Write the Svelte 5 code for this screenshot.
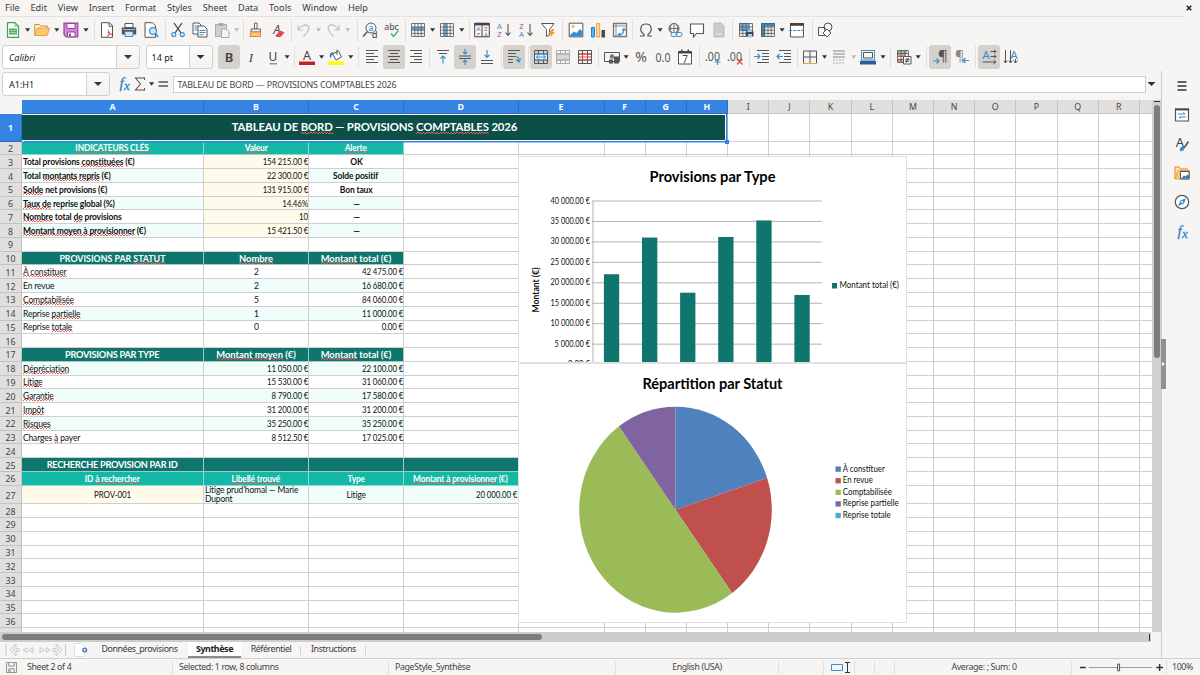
<script lang="ts">
  type Cell = { t: string; c: string };
  type Tool = { icon: string; arrow?: boolean; on?: boolean; dim?: boolean };
  type Group = { w: number; tools: Tool[] };

  const menus = ['File', 'Edit', 'View', 'Insert', 'Format', 'Styles', 'Sheet', 'Data', 'Tools', 'Window', 'Help'];

  // icon helpers
  const G = '#555';
  const B = '#3a8fd0';
  const line = (d: string, c = G, w = 1) => `<path d="${d}" fill="none" stroke="${c}" stroke-width="${w}"/>`;
  const fill = (d: string, c = G) => `<path d="${d}" fill="${c}"/>`;
  const txt = (x: number, y: number, s: string, size: number, c = G, extra = '') =>
    `<text x="${x}" y="${y}" font-size="${size}" fill="${c}" font-family="Noto Sans, sans-serif" text-anchor="middle" ${extra}>${s}</text>`;
  const table = (c: string) => line('M1.5 1.5h13v13h-13zM1.5 5h13M1.5 8.2h13M1.5 11.4h13M4.8 1.5v13M8 1.5v13M11.2 1.5v13', c, 0.8);
  const merged = (c: string, m: string) => line('M1.5 1.5h13v13h-13zM1.5 5h13M1.5 11h13M5.5 1.5v3.5M10.5 1.5v3.5M5.5 11v3.5M10.5 11v3.5', c) + line('M2 5h12M2 11h12', m);

  const icons: Record<string, string> = {
    new: `<path d="M2.5.7h7.5l3.5 3.5v11.1h-11z" fill="#fff" stroke="#3fa45b" stroke-width="1.2"/>` + fill('M4 6.5h8v6H4z', '#4fae67') + line('M10 .7v3.5h3.5', '#3fa45b', 0.8) + line('M4.5 8.5h7M4.5 10.500h7', '#d8efdd', 0.6),
    open: `<path d="M.8 13.5V2.5h4.5l1 1.5h7V6" fill="#fdf1dc" stroke="#e08a1e"/><path d="M.8 13.5 3.2 6h12.3l-2.3 7.5z" fill="#fbc878" stroke="#eba13d"/>`,
    save: `<path d="M1 1.2h13.8v13.6H3L1 12.5z" fill="#cf8ad6" stroke="#99459f" stroke-width="1.2"/><path d="M4 1.5h8v5H4z" fill="#fff" stroke="#99459f"/><path d="M4.5 10h7.5v4.8H4.5z" fill="#fff" stroke="#99459f"/>` + fill('M6 11.5h2v3H6z', '#99459f'),
    pdf: `<path d="M2.5.7h8l3 3v11.6h-11z" fill="#fff" stroke="#555"/>` + line('M10 .7v3.5h3.5') + line('M8 14.5c4-2 2-5 1.2-6M9 10c1 2 3 2.5 5.5 2.5', '#e1444d', 1.2),
    print: fill('M.8 5.5h14.4v7H.8z', '#515358') + `<path d="M4 1.5h8v4H4z" fill="#fff" stroke="#555"/><path d="M4 9.5h8v5H4z" fill="#cfe5f6" stroke="#3a8fd0"/>` + line('M2 7.5h12', '#fff', 0.6),
    preview: `<path d="M2 .7h7.5l3 3v11.6H2z" fill="#fff" stroke="#555"/><circle cx="10" cy="9" r="3.4" fill="#cfe7fa" stroke="#3a8fd0" stroke-width="1.2"/>` + line('M12.3 11.5l3 3.5', B, 1.5),
    cut: line('M4 1l7 10M12 1L5 11', '#444', 1.3) + `<circle cx="3.7" cy="12.6" r="2" fill="none" stroke="${B}" stroke-width="1.2"/><circle cx="12.3" cy="12.6" r="2" fill="none" stroke="${B}" stroke-width="1.2"/>`,
    copy: `<path d="M1 1h6l2 2v9H1z" fill="#fff" stroke="#555"/><path d="M6 4h6l3 3v8H6z" fill="#fff" stroke="#555"/>` + line('M2.5 4h4M2.5 6h3M2.5 8h3M7.5 8.5h6M7.5 10.5h6M7.5 12.7h4', B),
    paste: `<path d="M1.5 2.5h11v12h-11z" fill="#d0d0d0" stroke="#aaa"/><path d="M4.5 1h5v3h-5z" fill="#aaa"/><path d="M7.5 7h5l2.5 2.5v6H7.5z" fill="#f4f4f4" stroke="#aaa"/>`,
    brush: `<path d="M6.5 1h2.5v6H6.5z" fill="#fff" stroke="#666"/><path d="M3 7h9.5v3H3z" fill="#eee" stroke="#666"/><path d="M3 10h9.5v4.5H2z" fill="#f9c987" stroke="#e08a1e"/>`,
    clear: txt(7, 12, 'A', 13, '#555', 'font-style="italic"') + fill('M5.5 13.5l5-5 4 2-4 4.5h-4z', '#e4484f'),
    undo: line('M2 3v5h5M2.3 7.5C5 3.5 9 2 11.5 3.5c3 2 1 6-4 11', '#bbb', 1.1),
    redo: line('M14 3v5H9M13.7 7.5C11 3.5 7 2 4.5 3.5c-3 2-1 6 4 11', '#bbb', 1.1),
    find: `<circle cx="9" cy="6" r="5" fill="#f6fbff" stroke="#555"/>` + txt(9, 8.5, 'a', 8, '#1b6fb5') + line('M5.5 9.5l-4.5 5', '#555', 1.5) + txt(12.7, 15.5, 'd', 9.5, '#444'),
    spell: txt(7.5, 7.5, 'abc', 8.8, '#444') + line('M7 11.5l2.5 3 5-6', '#3fae67', 1.2),
    rows: fill('M1.5 5h13v3.3h-13z', '#62b0e6') + table('#555'),
    cols: fill('M5 1.5h3.3v13H5z', '#62b0e6') + table('#555'),
    sort: line('M.7 1.2h14.6v13.6H.7zM8 2v13', '#444') + fill('M.5 1h15v2.4H.5z', '#444') + txt(4.3, 9, 'A', 6, '#2a80c8') + txt(4.3, 14.5, 'Z', 6, '#9c3fa5') + txt(11.8, 9, 'Z', 6, '#9c3fa5') + txt(11.8, 14.5, 'A', 6, '#2a80c8'),
    asc: txt(3.5, 7, 'A', 7.6, B) + txt(3.5, 15, 'Z', 7.6, '#a44bad') + line('M12 2v11M9.5 10.5l2.5 3 2.5-3', '#555', 1.1),
    desc: txt(3.5, 7, 'Z', 7.6, '#a44bad') + txt(3.5, 15, 'A', 7.6, B) + line('M12 2v11M9.5 10.5l2.5 3 2.5-3', '#555', 1.1),
    filter: `<path d="M1.5 1.5h12.5L9.5 7.5v5.5l-3 1.5v-7z" fill="#fff" stroke="#555"/>` + fill('M12 7l-4 5h3l-1 3.5 5-5.5h-2.5l2-3z', '#f0982c'),
    image: `<path d="M1.2 1.2h13.6v13.6H1.2z" fill="#fff" stroke="#555"/>` + fill('M2 13l4-3.5 2.5 1.5 3.5-4 2.5 2.5V14H2z', '#3a8fd0') + `<circle cx="5" cy="4.500" r="1.3" fill="#fbd08a" stroke="#eba13d" stroke-width=".7"/>`,
    chart: `<path d="M1.5 5.5h3v9.500h-3z" fill="#62b0e6" stroke="#2a80c8"/><path d="M6.7 1.5h3V15h-3z" fill="#fbd9a8" stroke="#eba13d"/>` + fill('M11.5 8h3.5v7.500h-3.500z', '#4a4a4a'),
    pivot: `<path d="M1.5 1.5h13v13h-13z" fill="#fff" stroke="#777" stroke-width="1.3"/>` + line('M1.5 4h13M4 1.5v13', '#888') + line('M6 13c4 0 6-2.5 6-6M10 8.5L12 6.5l2 2M8 11l-2 2 2 1.8', B, 1.1),
    omega: line('M2 14h4v-1.5C1 9 2 2 8 2s7 7 2 10.5V14h4', '#555', 1.2),
    link: `<circle cx="7" cy="6.5" r="5" fill="none" stroke="#555"/>` + line('M2 6.5h10M7 1.5v10M4.5 2.5c-1.5 3-1.5 5 0 8M9.5 2.5c1.5 3 1.5 5 0 8', G, 0.8) + `<rect x="4" y="10.5" width="6" height="4" rx="2" fill="#f6f5f4" stroke="${B}"/><rect x="9" y="10.5" width="6" height="4" rx="2" fill="none" stroke="${B}"/>`,
    comment: `<path d="M1.5 2h13v9.5H7.5L4.5 15v-3.5h-3z" fill="#fff" stroke="#555" stroke-width="1.1"/>`,
    footer: `<path d="M3 1h7l3 3v11H3z" fill="#ccc" stroke="#bbb"/>` + line('M5 12h6', '#eee'),
    area: fill('M1 1h10v8H1z', '#62b0e6') + table('#555') + fill('M8 9.5h7.5v4.5H8z', '#445') + fill('M10 8h4v2h-4zM10 12h4v3.5h-4z', '#9fcbee'),
    freeze: fill('M1 1h14v3.5H1zM1 1h4v14H1z', '#3a8fd0') + table('#555'),
    split: `<path d="M1.5 1.5h13v13.5h-13z" fill="#fff" stroke="#555"/>` + fill('M1 1h14v2.8H1z', '#444') + `<path d="M0 8.500h16" stroke="${B}" stroke-width="1.2" stroke-dasharray="3 1"/>`,
    shapes: `<circle cx="11" cy="5" r="4" fill="none" stroke="#555"/>` + line('M1.5 5.5H8v8H1.5z') + `<path d="M10 7l4 4-4 4-4-4z" fill="#fff" stroke="#555"/>`,
    bold: txt(8, 12.5, 'B', 13, '#444', 'font-weight="600"'),
    italic: txt(8, 12.5, 'I', 13, '#444', 'font-style="italic" style="font-family:\'Liberation Serif\'"'),
    underline: txt(8, 12, 'U', 12, '#444') + line('M4.5 14.8h7.5', B, 1.2),
    fontcolor: txt(8, 11, 'A', 12.5, '#444') + fill('M0 12.5h16v3.5H0z', '#c9211e'),
    fillcolor: `<path d="M4.5 5l6-3 3 6-5.5 3z" fill="#fff" stroke="#555"/>` + line('M9 6V.5', '#555') + fill('M2.5 9.5C1 6 2 3 5.5 3L4 6z', '#2a80c8') + fill('M0 12.5h16v3.5H0z', '#ffff00'),
    left: line('M2 1.5h12M2 4.5h8M2 7.5h12M2 10.5h8M2 13.5h12'),
    center: line('M2 1.5h12M4 4.5h8M2 7.5h12M4 10.5h8M2 13.5h12'),
    right: line('M2 1.5h12M6 4.5h8M2 7.5h12M6 10.5h8M2 13.5h12'),
    top: line('M2 1.5h12M4 4.5h8') + line('M8 14.5V7M5.5 9.5L8 7l2.5 2.5', B, 1.2),
    middle: line('M2 7h12M2 9.5h12') + line('M8 0v5M6 3l2 2 2-2M8 16v-5M6 13l2-2 2 2', B, 1.2),
    bottom: line('M2 14.5h12M2 11.5h12') + line('M8 1v7M5.5 6L8 8.5 10.5 6', B, 1.2),
    wrap: line('M2 1.5h12M2 4.5h8M2 7.5h7M2 10.5h5M2 13.5h5') + line('M9 7.5c3 0 4 2 4 4.5M10 10.5l3 2.5 1.5-3.5', B, 1.2),
    mergec: fill('M2 5h12v6H2z', '#eaf5fd') + merged('#555', B) + line('M3 8h10M5.5 6L3.5 8l2 2M10.5 6l2 2-2 2', B),
    merge: fill('M2 5h12v6H2z', '#d8d8d8') + merged('#aaa', '#aaa'),
    unmerge: fill('M2 5h12v6H2z', '#fff') + merged('#555', '#d33d40') + line('M2 8h12M5.5 5v6M10.5 5v6', '#d33d40'),
    currency: line('M.5 3.5h15v9H.5z', '#555') + `<circle cx="8" cy="7.5" r="2.2" fill="#777"/>` + fill('M5 10.5h4v4H5zM10 7.5h5v7h-5z', '#555'),
    percent: txt(8, 12.5, '%', 14),
    number: txt(8, 12.5, '0.0', 13, G, 'textLength="15" lengthAdjust="spacingAndGlyphs"'),
    date: `<path d="M1.5 2.5h13v12.5h-13z" fill="#fff" stroke="#555"/>` + fill('M1.5 2h13v2.5h-13zM4 .5h1.5v2H4zM10.5.5H12v2h-1.5z', '#444') + txt(8, 13.5, '7', 10, '#444'),
    adddec: txt(7.5, 12, '.00', 13, G, 'textLength="15" lengthAdjust="spacingAndGlyphs"') + line('M9.5 13h6M12.5 10v6', B, 1.2),
    deldec: txt(7.5, 12, '.00', 13, G, 'textLength="15" lengthAdjust="spacingAndGlyphs"') + line('M10 10l5.5 5.5M15.5 10L10 15.5', '#e1444d', 1.2),
    indent: line('M3 1.5h12M8 4.5h7M8 7.5h7M8 10.5h7M3 13.5h12') + line('M0 7.5h6M3.5 5L6 7.5 3.5 10', B, 1.2),
    outdent: line('M3 1.5h12M8 4.5h7M8 7.5h7M8 10.5h7M3 13.5h12') + line('M1 7.5h6M3.5 5L1 7.5 3.5 10', B, 1.2),
    borders: line('M1.5 2h13v12.5M1.5 14.5V2M8 2v12.5M1.5 8h13') + line('M1.5 14.5h13', '#eba13d'),
    lines: line('M2 2h12M2 5h12M2 8h12', '#aaa', 1.4) + `<path d="M2 11h12M2 14h12" stroke="#aaa" stroke-dasharray="2 1"/>`,
    bordercolor: line('M1.5 1.5h13v9.5h-13z', B, 1) + line('M3.5 3.5h9v5.5h-9z', '#555') + fill('M0 11.8h16v3.7H0z', '#2a6099'),
    cond: fill('M1 1h10v3H1z', '#7bc98b') + fill('M1 4h9v3H1zM1 10h6v3H1z', '#ee8c8c') + line('M1.5 1.5h11v12h-11zM1.5 4.5h11M1.5 7.5h11M1.5 10.5h7M5 1.5v12M9 1.5v6', G, 0.8) + `<path d="M7.5 7.5h7.5v7.5H7.5z" fill="#fff" stroke="#555"/>` + line('M9 10.2h4.5M9 12.2h4.5M12.5 8.8l-2.5 5', '#333', 0.9),
    ltr: txt(11, 12, '¶', 15, '#555') + line('M1 12h6M4.5 9.5L7 12l-2.5 2.5', B, 1.2),
    rtl: txt(5.5, 12, '¶', 14, '#888') + line('M15 11.5H9M11.5 9L9 11.5l2.5 2.5', B, 1.2),
    horiz: txt(5, 9.5, 'A', 11.5, B) + line('M9.5 2.5h6M13 .8l2 1.7-2 1.7M9.5 7.5h6M13 5.8l2 1.7-2 1.7M1.5 13h13.5M12.5 11l2.5 2-2.5 2'),
    vert: txt(11, 9.5, 'A', 11.5, B) + line('M2.5 1v13M.8 11.5l1.7 2.5 1.7-2.5M7.5 1v13M5.8 11.5l1.7 2.5 1.7-2.5M12.5 10v4M10.5 11.5l2 2.5 2-2.5'),
    menu: line('M3.5 4h9M3.5 8h9M3.5 12h9', '#333', 1.6),
    props: `<path d="M1.5 2h13v12h-13z" fill="#fff" stroke="#555" stroke-width="1.2"/>` + line('M1 2.5h14', '#444', 1.8) + line('M4 7h7M9 5.5L11 7M12 10H5M7 11.5L5 10', B),
    styles: txt(6, 10.5, 'A', 13, '#444') + fill('M6 15c-1-3 1-5 4-4.5L10 14c-1 1-3 1.5-4 1z', B) + line('M10 12l4.5-6.5', '#555', 1.6),
    gallery: `<path d="M1 14V2h4l1.5 2H14" fill="#fde3bd" stroke="#e08a1e"/><path d="M1 14L4 5.5h11.5v8.500z" fill="#fbc878" stroke="#eba13d"/><path d="M6.500 6.500h8.500v7.500H6.500z" fill="#fff" stroke="#555"/>` + fill('M7 13.5l3-3 1.5 1 2-2 1.5 1.5v2.5z', '#2a80c8'),
    navigator: `<circle cx="8" cy="8" r="6.7" fill="#fff" stroke="#555" stroke-width="1.2"/>` + fill('M12 4L10 9.5 4 12 6.5 6.5z', B) + `<circle cx="8" cy="8" r="1" fill="#fff"/>`,
    fx: txt(5.5, 12, 'f', 15, '#2a86cf', 'font-style="italic" style="font-family:\'Liberation Serif\'" stroke="#2a86cf" stroke-width=".3"') + txt(10.8, 13.5, 'x', 13, '#2a86cf', 'font-style="italic" style="font-family:\'Liberation Serif\'" stroke="#2a86cf" stroke-width=".3"'),
    sigma: line('M12.5 4V2H3.5l5 6-5 6h9v-2', '#555', 1.1),
    equals: line('M3.5 6h9.5M3.5 10h9.5', '#555', 1.7)
  };

  const i = (icon: string, arrow = false): Tool => ({ icon, arrow });
  const on = (icon: string): Tool => ({ icon, on: true });
  const dim = (icon: string): Tool => ({ icon, arrow: true, dim: true });

  const standard: Group[] = [
    { w: 91.5, tools: [i('new', true), i('open', true), i('save', true)] },
    { w: 71, tools: [i('pdf'), i('print'), i('preview')] },
    { w: 78, tools: [i('cut'), i('copy'), dim('paste')] },
    { w: 48, tools: [i('brush'), i('clear')] },
    { w: 66, tools: [dim('undo'), dim('redo')] },
    { w: 48, tools: [i('find'), i('spell')] },
    { w: 64, tools: [i('rows', true), i('cols', true)] },
    { w: 93.5, tools: [i('sort'), i('asc'), i('desc'), i('filter')] },
    { w: 70, tools: [i('image'), i('chart'), i('pivot')] },
    { w: 100, tools: [i('omega', true), i('link'), i('comment'), i('footer')] },
    { w: 79.5, tools: [i('area'), i('freeze', true), i('split')] },
    { w: 30, tools: [i('shapes')] }
  ];

  const formatting: Group[] = [
    { w: 78.5, tools: [on('bold'), i('italic'), i('underline', true)] },
    { w: 64.5, tools: [i('fontcolor', true), i('fillcolor', true)] },
    { w: 71, tools: [i('left'), on('center'), i('right')] },
    { w: 71.5, tools: [i('top'), on('middle'), i('bottom')] },
    { w: 27, tools: [on('wrap')] },
    { w: 70.5, tools: [on('mergec'), i('merge'), i('unmerge')] },
    { w: 101, tools: [i('currency', true), i('percent'), i('number'), i('date')] },
    { w: 49.5, tools: [i('adddec'), i('deldec')] },
    { w: 48, tools: [i('indent'), i('outdent')] },
    { w: 93.5, tools: [i('borders', true), dim('lines'), i('bordercolor', true)] },
    { w: 36, tools: [i('cond', true)] },
    { w: 49, tools: [on('ltr'), i('rtl')] },
    { w: 50, tools: [on('horiz'), i('vert')] }
  ];

  const columns = 'ABCDEFGHIJKLMNOPQR'.split('');
  const rows = Array.from({ length: 37 }, (_, n) => n + 1);

  // words between underscores get the spell-check underline
  const cells: Record<string, Cell> = {};
  const put = (row: number, cls: string, ...values: string[]) => {
    const kinds = cls.split(' ');
    values.forEach((t, n) => (cells[columns[n] + row] = { t, c: kinds[n].split('.').join(' ') }));
  };

  put(1, 'title', 'TABLEAU DE _BORD_ — PROVISIONS _COMPTABLES_ 2026');
  put(2, 'sub sub sub', '_INDICATEURS CLÉS_', '_Valeur_', '_Alerte_');
  const indicators = [
    ['Total provisions _constituées_ (€)', '154 215.00 €', 'OK'],
    ['Total _montants repris_ (€)', '22 300.00 €', 'Solde positif'],
    ['_Solde_ net provisions (€)', '131 915.00 €', 'Bon taux'],
    ['_Taux de_ reprise global (%)', '14.46%', '—'],
    ['_Nombre_ total _de_ provisions', '10', '—'],
    ['_Montant moyen à provisionner_ (€)', '15 421.50 €', '—']
  ];
  indicators.forEach((v, n) => put(n + 3, n % 2 ? 'strong.alt num.cream strong.mid.alt' : 'strong num.cream strong.mid', ...v));

  put(10, 'head.section head head', 'PROVISIONS PAR _STATUT_', '_Nombre_', '_Montant_ total (€)');
  const byStatus = [
    ['_À constituer_', '2', '42 475.00 €'],
    ['En revue', '2', '16 680.00 €'],
    ['_Comptabilisée_', '5', '84 060.00 €'],
    ['Reprise _partielle_', '1', '11 000.00 €'],
    ['Reprise _totale_', '0', '0.00 €']
  ];
  byStatus.forEach((v, n) => put(n + 11, n % 2 ? 'alt mid.alt num.alt' : 'txt mid num', ...v));

  put(17, 'head.big head head', 'PROVISIONS PAR TYPE', '_Montant moyen_ (€)', '_Montant_ total (€)');
  const byType = [
    ['_Dépréciation_', '11 050.00 €', '22 100.00 €'],
    ['_Litige_', '15 530.00 €', '31 060.00 €'],
    ['_Garantie_', '8 790.00 €', '17 580.00 €'],
    ['_Impôt_', '31 200.00 €', '31 200.00 €'],
    ['_Risques_', '35 250.00 €', '35 250.00 €'],
    ['Charges _à_ payer', '8 512.50 €', '17 025.00 €']
  ];
  byType.forEach((v, n) => put(n + 18, n % 2 ? 'txt num num' : 'alt num.alt num.alt', ...v));

  put(25, 'head.big head head head', 'RECHERCHE PROVISION PAR ID', '', '', '');
  put(26, 'sub sub sub sub', 'ID _à rechercher_', '_Libellé trouvé_', 'Type', '_Montant à provisionner_ (€)');
  put(27, 'mid.cream.code wrap.alt mid.alt num.alt', 'PROV-001', 'Litige prud’homal — Marie Dupont', 'Litige', '20 000.00 €');

  // bar chart, in pixels relative to its frame
  const bars = [22100, 31060, 17580, 31200, 35250, 17025];
  const zero = 208.6;
  const step = 20.45;
  const ticks = [0, 5, 10, 15, 20, 25, 30, 35, 40];

  const statuses = [
    { name: 'À constituer', n: 2, color: '#4f81bd', len: 42 },
    { name: 'En revue', n: 2, color: '#c0504d', len: 30 },
    { name: 'Comptabilisée', n: 5, color: '#9bbb59', len: 49 },
    { name: 'Reprise partielle', n: 1, color: '#8064a2', len: 56 },
    { name: 'Reprise totale', n: 0, color: '#4bacc6', len: 48 }
  ];
  const point = (f: number) => {
    const a = f * 2 * Math.PI;
    return `${157.5 + 96.3 * Math.sin(a)} ${146.7 - 103 * Math.cos(a)}`;
  };
  let acc = 0;
  const slices = statuses.filter((s) => s.n).map((s) => {
    const from = acc / 10;
    acc += s.n;
    return { color: s.color, d: `M157.5 146.7L${point(from)}A96.3 103 0 0 1 ${point(acc / 10)}Z` };
  });

  const sidebar = ['menu', 'props', 'styles', 'gallery', 'navigator', 'fx'];
</script>

{#snippet glyph(name: string)}
  <svg class="glyph" viewBox="0 0 16 16">{@html icons[name]}</svg>
{/snippet}

{#snippet toolbar(groups: Group[])}
  {#each groups as group}
    <div class="group" style="width:{group.w}px">
      {#each group.tools as tool}
        <span class="tool" class:on={tool.on}>{@render glyph(tool.icon)}</span>
        {#if tool.arrow}<span class="arrow" class:dim={tool.dim}></span>{/if}
      {/each}
    </div>
  {/each}
{/snippet}

<div class="window">
  <nav class="menubar">
    {#each menus as menu}<span>{menu}</span>{/each}
    <svg class="close" viewBox="0 0 6 6"><path d="M.7.7l4.600 4.600M5.300.7L.7 5.300" stroke="#222" stroke-width="1.500" /></svg>
  </nav>

  <div class="bar standard">{@render toolbar(standard)}</div>
  <div class="bar formatting">
    <div class="combo font"><i>Calibri</i><span class="drop"></span></div>
    <div class="combo size"><span>14 pt</span><span class="drop"></span></div>
    {@render toolbar(formatting)}
  </div>

  <div class="body">
    <main>
      <div class="formula">
        <div class="combo name"><span>A1:H1</span><span class="drop"></span></div>
        <div class="fn">
          {@render glyph('fx')}{@render glyph('sigma')}<span class="arrow"></span>{@render glyph('equals')}
        </div>
        <div class="input">TABLEAU DE BORD — PROVISIONS COMPTABLES 2026</div>
        <span class="expand"></span>
      </div>

      <div class="view">
        <div class="sheet">
          <div class="row header">
            <div class="corner"></div>
            {#each columns as col, n}<div class="col" class:sel={n < 8}>{col}</div>{/each}
            <div class="col"></div>
          </div>
          {#each rows as row}
            <div class="row" class:first={row === 1} class:tall={row === 27}>
              <div class="rownum" class:sel={row === 1}>{row < 37 ? row : ''}</div>
              {#each columns as col, n}
                {@const cell = cells[col + row]}
                {#if row > 1 || n === 0 || n > 7}
                  <div class="cell {cell ? cell.c : ''}">
                    {#if cell}<span>{#each cell.t.split('_') as part, k}{#if k % 2}<u>{part}</u>{:else}{part}{/if}{/each}</span>{/if}
                  </div>
                {/if}
              {/each}
              <div class="cell"></div>
            </div>
          {/each}

          <svg class="chart bars" viewBox="0 0 389 207">
            <text class="heading" x="194.500" y="25.500" textLength="126" lengthAdjust="spacingAndGlyphs">Provisions par Type</text>
            {#each ticks as t, n}
              <path d="M74 {zero - n * step}H304" stroke="#b3b3b3" />
              <text x="72" y={zero - n * step + 2.5} text-anchor="end" textLength={n > 1 ? 39.5 : n ? 35.5 : 22} lengthAdjust="spacingAndGlyphs">{n ? t + ' 000' : '0'}.00 €</text>
            {/each}
            <path d="M75 45V207" stroke="#b3b3b3" />
            {#each bars as v, n}
              <rect x={85.9 + n * 38.1} y={zero - (v / 5000) * step} width="15.300" height={(v / 5000) * step} fill="#0f766e" />
            {/each}
            <text class="axis" transform="translate(20.500 134) rotate(-90)" text-anchor="middle" textLength="45" lengthAdjust="spacingAndGlyphs">Montant (€)</text>
            <rect x="314" y="127" width="5" height="5.500" fill="#0f766e" />
            <text x="321.500" y="132" textLength="59.500" lengthAdjust="spacingAndGlyphs">Montant total (€)</text>
          </svg>

          <svg class="chart pie" viewBox="0 0 389 260">
            <text class="heading" x="194.500" y="25.500" textLength="140" lengthAdjust="spacingAndGlyphs">Répartition par Statut</text>
            {#each slices as s}<path d={s.d} fill={s.color} />{/each}
            {#each statuses as s, n}
              <rect x="317.500" y={103.5 + n * 11.6} width="5.300" height="5.300" fill={s.color} />
              <text x="324.800" y={108.5 + n * 11.6} textLength={s.len} lengthAdjust="spacingAndGlyphs">{s.name}</text>
            {/each}
          </svg>

          <div class="selection"></div>
        </div>
        <div class="vscroll"><i></i><b></b></div>
      </div>
      <div class="hscroll"><b></b><i></i></div>

      <div class="tabs">
        <svg class="navs" viewBox="0 0 62 14" fill="none" stroke="#cccac8">
          <path d="M1 1v12M11 1L5 7l6 6M11 1v3L8 7l3 3v3M11 5.500v3h3v-3zM22 4.500L18 7l4 2.500zM28 4.500L24 7l4 2.500zM35 4.500L39 7l-4 2.500zM41 4.500L45 7l-4 2.500zM51 1l6 6-6 6M51 1v3l3 3-3 3v3M48 5.500v3h3v-3zM60.500 1v12" />
        </svg>
        <svg class="add" viewBox="0 0 14 14">
          <path d="M.5.500h7l3 3v10H.5z" fill="#fff" stroke="#e4e2e0" />
          <circle cx="10.700" cy="7" r="2.500" fill="#3b6fc0" />
          <path d="M9.200 7h3M10.700 5.500v3" stroke="#fff" stroke-width=".8" />
        </svg>
        <span class="tab t1">Données_provisions</span>
        <span class="tab active">Synthèse</span>
        <span class="tab t3">Référentiel</span>
        <span class="tab t4">Instructions</span>
      </div>
    </main>

    <aside>
      <div class="handle"></div>
      {#each sidebar as name}<span class="side">{@render glyph(name)}</span>{/each}
    </aside>
  </div>

  <footer>
    <div class="s-sheet">
      <svg viewBox="0 0 12 12" width="11" height="11" fill="none" stroke="#888"><path d="M.5.500h11v11h-11zM3 .5v4h6v-4M3 11.500v-4h6v4M4.500 8.500v3" /></svg>
      <span>Sheet 2 of 4</span>
    </div>
    <div class="s-sel">Selected: 1 row, 8 columns</div>
    <div class="s-page">PageStyle_Synthèse</div>
    <div class="s-lang">English (USA)</div>
    <div class="s-gap"></div>
    <div class="s-mode">
      <svg viewBox="0 0 22 14" width="22" height="14" fill="none">
        <path d="M1.500 4.500h11v6h-11z" stroke="#3a8fd0" />
        <path d="M15 2.500h5M17.500 2.500v10M15 12.500h5" stroke="#333" />
      </svg>
    </div>
    <div class="s-small"></div>
    <div class="s-small"></div>
    <div class="s-sum">Average: ; Sum: 0</div>
    <div class="s-zoom">
      <svg viewBox="0 0 90 14" width="90" height="14">
        <path d="M2 7.500h6M80 7.500h7M83.500 4v7" stroke="#333" stroke-width="1.500" />
        <path d="M11 7.500h65" stroke="#999" />
        <path d="M40.500 4h2v7h-2z" fill="#eee" stroke="#555" />
      </svg>
    </div>
    <div class="s-pct">100%</div>
  </footer>
</div>

<style>
  :global(body) {
    background: #f6f5f4;
    overflow: hidden;
  }

  .window {
    width: 1200px;
    height: 675px;
    display: flex;
    flex-direction: column;
    background: #f6f5f4;
    color: #3a3a3a;
    font-family: 'Noto Sans', sans-serif;
    font-size: 8.9px;
    overflow: hidden;
    white-space: nowrap;
  }

  .menubar {
    display: flex;
    align-items: center;
    gap: 10.8px;
    height: 16px;
    flex: none;
    width: 1179px;
    padding-left: 5px;
    border-bottom: 1px solid #e4e2e0;
    line-height: 16px;
    font-size: 9.2px;
  }

  .close {
    width: 6px;
    height: 6px;
    margin-left: auto;
    margin-right: -8px;
  }

  .bar {
    display: flex;
    align-items: center;
    flex: none;
    box-sizing: border-box;
    height: 27px;
    padding: 0 0 1px 2px;
  }

  .group {
    display: flex;
    align-items: center;
    box-sizing: border-box;
    height: 22px;
    padding-left: 1.5px;
    border-left: 1px solid #e2e0de;
    flex: none;
  }

  .group:first-child {
    padding-left: 0;
    border-left: 0;
  }

  .size + .group {
    border-left-color: transparent;
  }

  .tool {
    display: grid;
    place-items: center;
    width: 22px;
    height: 24px;
    flex: none;
    border-radius: 3px;
  }

  .on {
    background: #d5d1cd;
  }

  .glyph {
    width: 16px;
    height: 16px;
    display: block;
    overflow: visible;
    flex: none;
  }

  .arrow {
    width: 7.2px;
    height: 4px;
    flex: none;
    background: #333;
    clip-path: polygon(15% 5%, 86% 5%, 50% 95%);
  }

  .arrow.dim {
    background: #bbb;
  }

  .combo {
    display: flex;
    align-items: center;
    justify-content: space-between;
    box-sizing: border-box;
    height: 24px;
    padding-left: 6px;
    border: 1px solid #d2cfcc;
    border-radius: 3px;
    background: #fff;
    color: #222;
    flex: none;
    font-size: 9px;
  }

  .font {
    width: 138px;
    margin-right: 5.5px;
  }

  .size {
    width: 67px;
    padding-left: 5px;
    margin-right: 2.5px;
  }

  .name {
    width: 108px;
  }

  .drop {
    width: 22px;
    height: 100%;
    border-left: 1px solid #d2cfcc;
    background: linear-gradient(#fafafa, #f3f2f1);
    border-radius: 0 3px 3px 0;
    display: grid;
    place-items: center;
  }

  .drop::after,
  .expand {
    content: '';
    width: 8px;
    height: 4px;
    background: #2e3436;
    clip-path: polygon(0 0, 100% 0, 50% 100%);
  }

  .body {
    display: flex;
    height: 588px;
    flex: none;
    border-bottom: 1px solid #d0cecc;
    box-sizing: border-box;
  }

  main {
    width: 1161px;
    flex: none;
    display: flex;
    flex-direction: column;
  }

  .formula {
    display: flex;
    align-items: center;
    height: 29px;
    padding: 0 4px 3px 2px;
    box-sizing: border-box;
    flex: none;
  }

  .fn {
    display: flex;
    align-items: center;
    width: 62.5px;
    box-sizing: border-box;
    padding-left: 6px;
  }

  .input {
    width: 973px;
    height: 17px;
    line-height: 15px;
    box-sizing: border-box;
    padding-left: 4px;
    border: 1px solid #d2cfcc;
    background: #fff;
    margin-right: 2px;
    font-size: 8.9px;
    letter-spacing: -0.14px;
    color: #444;
  }

  .view {
    display: flex;
    height: 532px;
    flex: none;
  }

  .sheet {
    position: relative;
    width: 1152px;
    height: 532px;
    flex: none;
    overflow: hidden;
    background: #fff;
    font-family: Lato, sans-serif;
    font-size: 8.9px;
    color: #111;
  }

  .row {
    display: grid;
    grid-template-columns: 22px 182px 105px 95px 114.5px 86px 41.2px 41.2px 41.2px repeat(10, 41.2px) 20px;
    height: 13.77px;
  }

  .header {
    height: 14px;
  }

  .first {
    height: 27.6px;
  }

  .tall {
    height: 18.6px;
  }

  .corner {
    background: #f6f5f4;
  }

  .col,
  .rownum {
    box-sizing: border-box;
    display: flex;
    align-items: center;
    justify-content: center;
    background: #e0dfde;
    border-right: 1px solid #c3c3c3;
    border-bottom: 1px solid #c3c3c3;
    color: #444;
    font-family: 'Noto Sans', sans-serif;
    font-size: 8.8px;
    line-height: 10px;
    min-width: 0;
  }

  .rownum {
    padding-top: 2px;
  }

  .col.sel,
  .rownum.sel {
    background: #3584e4;
    border-color: #2c6fc2;
    color: #fff;
    font-weight: bold;
  }

  .cell {
    box-sizing: border-box;
    display: flex;
    align-items: center;
    min-width: 0;
    padding: 0 1px;
    border-right: 1px solid #cfcfcf;
    border-bottom: 1px solid #cfcfcf;
    line-height: 9px;
    letter-spacing: -0.15px;
  }

  .cell span {
    transform: scaleX(0.955);
    transform-origin: left;
  }

  /* small zigzag made of two dashed rows */
  .cell u {
    text-decoration: none;
    background:
      repeating-linear-gradient(90deg, #e8605a 0 1.5px, transparent 1.5px 3px) 0 100% / 100% 1px no-repeat,
      repeating-linear-gradient(90deg, transparent 0 1.5px, #e8605a 1.5px 3px) 0 calc(100% - 1px) / 100% 1px no-repeat;
  }

  .title {
    grid-column: 2 / 10;
    justify-content: center;
    background: #0b4f48;
    color: #fff;
    font-size: 12.2px;
    font-weight: bold;
    line-height: 14px;
  }

  .cell.title span {
    transform: scaleX(0.93);
    transform-origin: center;
  }

  .sub,
  .head {
    justify-content: center;
    color: #fff;
    font-weight: bold;
  }

  .cell.sub span,
  .cell.mid span {
    transform-origin: center;
  }

  .cell.sub span {
    transform: scaleX(0.94);
  }

  .cell.head span {
    transform: none;
  }

  .sub {
    background: #14b8a6;
    border-color: #8fd8cf;
  }

  .head {
    background: #0f766e;
    border-color: #a7c9c5;
    font-size: 9.4px;
    letter-spacing: 0;
  }

  .cell.section span {
    transform: scaleX(0.94);
    transform-origin: center;
  }

  .big {
    font-size: 10px;
    letter-spacing: -0.3px;
  }

  .cell.big span {
    transform: scaleX(0.92);
    transform-origin: center;
  }

  .strong {
    font-weight: bold;
  }

  .num {
    justify-content: flex-end;
    padding-right: 0;
  }

  .cell.num span {
    transform: scaleX(0.89);
    transform-origin: right;
  }

  .mid {
    justify-content: center;
  }

  .cell.code span {
    transform: scaleX(0.9);
  }

  .alt {
    background: #f0fdfa;
  }

  .cream {
    background: #fffbeb;
  }

  .wrap {
    white-space: normal;
    line-height: 8.8px;
  }

  .chart {
    position: absolute;
    left: 518px;
    width: 389px;
    background: #fff;
    outline: 1px solid #e0e0e0;
    outline-offset: -1px;
    overflow: hidden;
    font-family: Lato, sans-serif;
    font-size: 8.8px;
    fill: #111;
  }

  .bars {
    top: 56px;
    height: 207px;
  }

  .pie {
    top: 263px;
    height: 260px;
  }

  .heading {
    font-size: 15.8px;
    font-weight: bold;
    text-anchor: middle;
    fill: #000;
  }

  .axis {
    font-weight: bold;
    font-size: 8.5px;
  }

  .selection {
    position: absolute;
    left: 22px;
    top: 14px;
    width: 703px;
    height: 25px;
    border: 1px solid #fff;
    border-left: 0;
    box-shadow: 1.5px 1.5px 0 #3584e4;
  }

  .selection::after {
    content: '';
    position: absolute;
    right: -4px;
    bottom: -4px;
    width: 4px;
    height: 4px;
    background: #3584e4;
  }

  .vscroll {
    display: flex;
    flex-direction: column;
    align-items: center;
    width: 9px;
    background: #d0d0d0;
  }

  .vscroll i {
    width: 6px;
    height: 1px;
    margin: 1px 0 3px;
    background: #333;
  }

  .vscroll b {
    width: 6px;
    height: 253px;
    border-radius: 3px;
    background: #7c7e7d;
  }

  .hscroll {
    display: flex;
    align-items: center;
    justify-content: space-between;
    width: 1151px;
    height: 10px;
    flex: none;
    padding: 0 1px 0 2px;
    box-sizing: border-box;
    background: #cdcdcd;
  }

  .hscroll b {
    width: 540px;
    height: 6px;
    border-radius: 3px;
    background: #7c7e7d;
  }

  .hscroll i {
    width: 1px;
    height: 7px;
    background: #333;
  }

  .tabs {
    display: flex;
    align-items: center;
    height: 16px;
    padding-left: 5px;
    font-size: 8.9px;
    letter-spacing: -0.42px;
  }

  .navs {
    width: 62px;
    height: 14px;
  }

  .add {
    width: 14px;
    height: 14px;
    margin: 0 6px 0 7px;
  }

  .tab {
    box-sizing: border-box;
    height: 16px;
    line-height: 14px;
    text-align: center;
  }

  .t1 {
    width: 94px;
    padding-right: 3px;
  }

  .active {
    width: 53px;
    background: #fff;
    font-weight: bold;
    border-bottom: 2px solid #8b8b8b;
    color: #222;
  }

  .t3 {
    width: 60px;
  }

  .t4 {
    width: 65px;
  }

  .t3,
  .t4 {
    background: linear-gradient(#d0cecc, #d0cecc) right 4px / 1px 9px no-repeat;
  }

  aside {
    position: relative;
    flex: 1;
    display: flex;
    flex-direction: column;
    align-items: center;
    border-left: 1px solid #d0cecc;
    padding-left: 2px;
  }

  .side {
    height: 29.2px;
    display: grid;
    place-items: center;
    flex: none;
  }

  .handle {
    position: absolute;
    left: -1px;
    top: 268px;
    width: 5px;
    height: 50px;
    background: #929292;
  }

  .handle::after {
    content: '';
    position: absolute;
    left: 1px;
    top: 23px;
    width: 3px;
    height: 4px;
    background: #fff;
    clip-path: polygon(0 0, 100% 50%, 0 100%);
  }

  footer {
    display: flex;
    align-items: center;
    flex: 1;
    font-size: 8.8px;
    letter-spacing: -0.36px;
    color: #444;
  }

  footer > div {
    box-sizing: border-box;
    height: 13px;
    line-height: 13px;
    border-right: 1px solid #e2e0de;
    display: flex;
    align-items: center;
    padding-left: 6px;
    flex: none;
  }

  .s-sheet {
    width: 173px;
    gap: 10px;
  }

  .s-sel {
    width: 216px;
  }

  .s-page {
    width: 227px;
  }

  footer > .s-lang {
    width: 163px;
    justify-content: center;
    padding: 0;
  }

  .s-gap {
    width: 45px;
  }

  .s-mode {
    width: 31px;
  }

  .s-small {
    width: 20px;
  }

  footer > .s-sum {
    width: 177px;
    justify-content: center;
    padding: 0 0 0 2px;
  }

  .s-zoom {
    width: 95px;
  }

  footer > .s-pct {
    border: 0;
    padding-left: 5px;
  }
</style>
